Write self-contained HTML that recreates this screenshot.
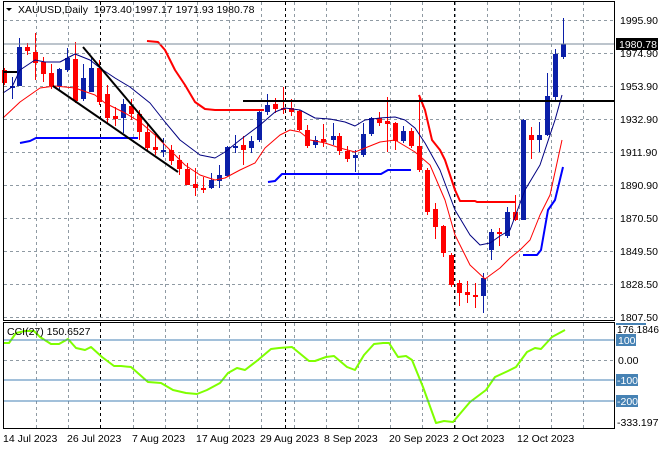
<!DOCTYPE html>
<html><head><meta charset="utf-8"><style>
html,body{margin:0;padding:0;background:#fff;}
svg{display:block;font-family:"Liberation Sans",sans-serif;}
</style></head><body>
<svg id="s" width="660" height="450" viewBox="0 0 660 450" xmlns="http://www.w3.org/2000/svg">
<rect width="660" height="450" fill="#fff"/>
<g id="grid" stroke="#8f9aa3" stroke-width="1" stroke-dasharray="3,3" fill="none"></g>
<g id="cand"></g>
<g fill="none" stroke-linejoin="round">
<polyline stroke="#000080" stroke-width="1" points="3,93 12,87 20,70 35,60 45,62 60,62 75,54 90,60 100,68 115,78 130,87 150,103 165,122 180,140 200,155 215,158 225,152 240,140 260,125 275,112 285,108 300,110 315,118 330,119 345,122 355,126 365,120 380,118 395,117 405,120 415,128 425,143 440,170 455,210 470,235 480,245 490,243 500,236 510,230 525,190 540,165 555,120 562,95"/>
<polyline stroke="#ff0000" stroke-width="1" points="3,118 20,102 40,88 55,86 75,88 95,95 105,103 115,108 125,113 140,122 155,135 170,150 185,165 200,175 215,180 225,178 240,170 255,163 265,148 280,135 290,130 300,132 310,140 325,143 340,148 355,152 365,148 380,142 395,140 415,152 430,165 445,200 455,235 470,265 485,279 500,268 510,258 520,250 530,240 540,215 550,195 562,140"/>
<polyline stroke="#ff0000" stroke-width="2" points="147,41 158,42 165,50 175,70 185,85 195,102 205,109 215,110 264,110"/>
<polyline stroke="#ff0000" stroke-width="2" points="419,95 425,110 432,140 440,150 445,160 450,175 455,190 460,201 475,201 477,202 515,202"/>
<polyline stroke="#0000ff" stroke-width="2" points="20,143 30,141 36,138 138,138"/>
<polyline stroke="#0000ff" stroke-width="2" points="268,182 275,181 282,174 381,174 388,170 411,170"/>
<polyline stroke="#0000ff" stroke-width="2" points="523,255 537,255 541,250 548,210 555,200 563,167"/>
<line x1="83" y1="47" x2="163" y2="142" stroke="#000" stroke-width="2"/>
<line x1="53" y1="86" x2="178" y2="172" stroke="#000" stroke-width="2"/>
<line x1="3" y1="72" x2="17" y2="72" stroke="#000" stroke-width="2"/>
<line x1="243" y1="101" x2="614" y2="101" stroke="#000" stroke-width="2"/>
<polyline stroke="#7fff00" stroke-width="2" points="3,343 9,343 16,333 25,331 34,331 40,337 51,344 59,344 68,339 76,348 85,350 91,347 102,357 114,366 121,366 131,367 148,382 161,383 173,390 186,393 197,394 207,390 220,383 228,373 237,368 245,370 258,360 271,349 279,348 292,347 309,361 315,361 326,357 334,356 347,367 355,370 364,355 374,344 383,343 389,343 398,357 406,356 412,360 423,387 436,423 444,421 453,422 470,402 486,390 495,377 508,371 516,367 527,352 535,348 541,349 552,337 565,330"/>
</g>
<line x1="3" y1="44" x2="614" y2="44" stroke="#7a8a99" stroke-width="1"/>
<g stroke="#4682b4" stroke-width="1">
<line x1="3" y1="340" x2="614" y2="340"/><line x1="3" y1="380" x2="614" y2="380"/><line x1="3" y1="401" x2="614" y2="401"/>
</g>
<g fill="none" stroke="#000" stroke-width="1">
<rect x="3.5" y="1.5" width="611" height="319"/>
<rect x="3.5" y="322.5" width="611" height="106"/>
</g>
<g font-size="10.5" fill="#000">
<text x="18" y="13">XAUUSD,Daily&#160;&#160;1973.40 1997.17 1971.93 1980.78</text>
<path d="M6,8 L12,8 L9,11 Z" fill="#000"/>
<text x="7" y="335">CCI(27) 150.6527</text>
<text x="620" y="24">1995.90</text>
<text x="620" y="57">1974.90</text>
<text x="620" y="90">1953.90</text>
<text x="620" y="123">1932.90</text>
<text x="620" y="156">1911.90</text>
<text x="620" y="189">1890.90</text>
<text x="620" y="222">1870.50</text>
<text x="620" y="255">1849.50</text>
<text x="620" y="288">1828.50</text>
<text x="620" y="321">1807.50</text>
<rect x="616" y="38" width="42" height="12" fill="#000"/>
<text x="619" y="48" fill="#fff">1980.78</text>
<rect x="616" y="323" width="30" height="2" fill="#4682b4"/>
<text x="617" y="333" textLength="42" lengthAdjust="spacingAndGlyphs">176.1846</text>
<rect x="616" y="334" width="20" height="12" fill="#4682b4"/>
<text x="618" y="344" fill="#fff">100</text>
<text x="618" y="364">0.00</text>
<rect x="616" y="374" width="22" height="12" fill="#4682b4"/>
<text x="617" y="384" fill="#fff">-100</text>
<rect x="616" y="395" width="22" height="12" fill="#4682b4"/>
<text x="617" y="405" fill="#fff">-200</text>
<text x="617" y="426">-333.197</text>
<text x="3" y="442">14 Jul 2023</text>
<text x="67" y="442">26 Jul 2023</text>
<text x="132" y="442">7 Aug 2023</text>
<text x="196" y="442">17 Aug 2023</text>
<text x="260" y="442">29 Aug 2023</text>
<text x="324" y="442">8 Sep 2023</text>
<text x="389" y="442">20 Sep 2023</text>
<text x="453" y="442">2 Oct 2023</text>
<text x="517" y="442">12 Oct 2023</text>
</g>
</svg>
<script>
(function(){
var NS="http://www.w3.org/2000/svg";
var g=document.getElementById("grid");
function ln(p,x1,y1,x2,y2,st,da){var l=document.createElementNS(NS,"line");l.setAttribute("x1",x1);l.setAttribute("y1",y1);l.setAttribute("x2",x2);l.setAttribute("y2",y2);if(st)l.setAttribute("stroke",st);if(da)l.setAttribute("stroke-dasharray",da);p.appendChild(l);}
for(var x=36;x<614;x+=32.2){ln(g,Math.round(x)+.5,2,Math.round(x)+.5,320);ln(g,Math.round(x)+.5,323,Math.round(x)+.5,428);}
for(var y=20;y<=317;y+=33){ln(g,4,y+.5,614,y+.5);}
ln(g,4,360.5,614,360.5);
[100,285,454].forEach(function(x){ln(g,x+.5,2,x+.5,320,"#000","3,3");ln(g,x+.5,323,x+.5,428,"#000","3,3");});
var c=[[4,'r',70,83,68,85],[12,'b',86,86,77,99],[19,'b',47,86,38,86],[27,'r',47,51,43,55],[35,'r',52,63,33,80],[43,'r',62,74,57,82],[51,'r',73,86,64,89],[59,'b',69,86,68,90],[67,'b',58,70,48,72],[75,'r',59,101,42,103],[83,'b',78,99,64,101],[91,'b',68,92,58,92],[99,'r',68,102,60,105],[107,'r',94,118,85,123],[115,'r',116,119,107,126],[123,'b',104,118,99,133],[131,'r',106,114,99,120],[139,'r',114,132,110,140],[147,'r',132,148,123,152],[155,'r',147,150,133,155],[163,'b',150,151,138,157],[171,'r',150,161,145,165],[179,'r',160,169,155,175],[187,'r',169,185,163,185],[195,'r',184,188,168,196],[203,'r',188,190,177,193],[211,'b',180,188,173,189],[219,'b',175,181,165,188],[227,'b',147,176,146,177],[235,'b',146,148,135,153],[243,'r',145,150,136,165],[251,'b',141,148,136,153],[259,'b',112,140,110,142],[267,'b',105,112,94,115],[275,'r',104,109,98,113],[283,'r',108,110,87,114],[291,'r',108,112,99,116],[299,'r',111,130,110,131],[307,'r',130,146,125,148],[315,'b',140,145,136,148],[323,'r',139,142,124,147],[333,'b',136,140,123,145],[339,'r',136,151,133,155],[347,'r',151,159,146,162],[355,'b',155,158,150,172],[363,'b',134,155,123,157],[371,'b',118,134,117,136],[379,'r',118,123,112,126],[387,'r',121,124,97,152],[395,'r',123,141,122,150],[403,'b',131,141,126,143],[411,'r',131,146,128,148],[419,'r',146,170,95,172],[427,'r',170,212,168,215],[435,'r',209,227,203,239],[443,'r',226,253,225,257],[451,'r',255,285,253,287],[459,'r',283,293,280,306],[467,'r',292,295,281,303],[475,'r',295,297,283,308],[483,'b',278,296,273,313],[491,'b',232,250,229,260],[499,'r',232,234,228,246],[507,'b',212,236,207,238],[515,'r',212,220,195,221],[523,'b',120,220,119,220],[531,'r',135,140,127,159],[539,'b',135,140,122,152],[547,'b',96,135,73,136],[555,'b',54,97,49,101],[563,'b',44,57,18,59]];
var cg=document.getElementById("cand");
c.forEach(function(d){var col=d[1]=='r'?'#ff0000':'#0b1fa8';
ln(cg,d[0]+.5,d[4],d[0]+.5,d[5],col);
var r=document.createElementNS(NS,"rect");r.setAttribute("x",d[0]-2);r.setAttribute("y",d[2]);r.setAttribute("width",5);r.setAttribute("height",Math.max(2,d[3]-d[2]));r.setAttribute("fill",col);cg.appendChild(r);});
})();
</script>
</body></html>
